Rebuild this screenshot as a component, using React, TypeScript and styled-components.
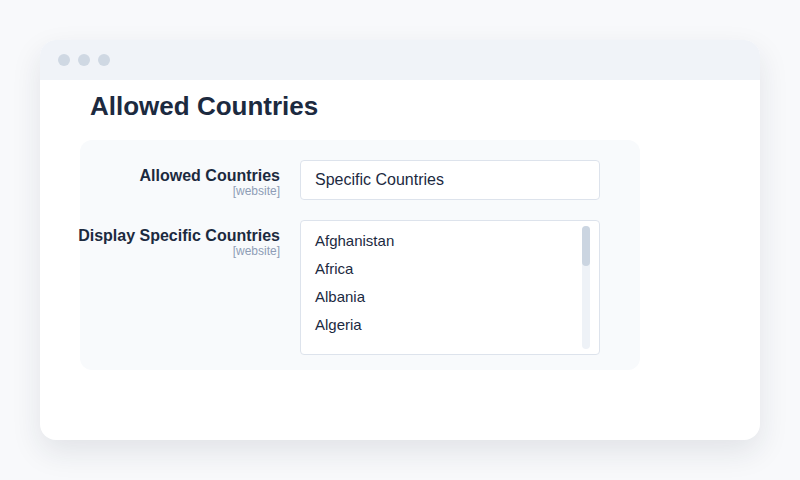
import * as React from 'react';
import styled, { createGlobalStyle } from 'styled-components';

const GlobalStyle = createGlobalStyle`
  html, body {
    margin: 0;
    padding: 0;
    background: #f8f9fb;
    font-family: 'Liberation Sans', Arial, sans-serif;
  }
`;

const Page = styled.div`
  width: 800px;
  height: 480px;
  padding: 40px;
  box-sizing: border-box;
`;

const Window = styled.div`
  width: 720px;
  height: 400px;
  background: #fff;
  border-radius: 16px;
  overflow: hidden;
  box-shadow: 0 12px 30px rgba(30, 41, 59, 0.1);
`;

const TitleBar = styled.div`
  height: 40px;
  background: #f0f3f8;
  display: flex;
  align-items: center;
  gap: 8px;
  padding-left: 18px;
`;

const Dot = styled.span`
  width: 12px;
  height: 12px;
  border-radius: 50%;
  background: #cfd8e3;
`;

const Content = styled.div`
  padding: 11px 0 0 40px;
`;

const Heading = styled.h1`
  margin: 0 0 18px 10px;
  font-size: 26px;
  line-height: 31px;
  font-weight: 700;
  color: #1c2a3f;
`;

const Panel = styled.div`
  width: 560px;
  box-sizing: border-box;
  background: #f8fafc;
  border-radius: 12px;
  padding: 20px 40px 15px 0;
  display: grid;
  grid-template-columns: 200px 300px;
  column-gap: 20px;
  row-gap: 20px;
`;

const LabelCell = styled.div`
  display: flex;
  flex-direction: column;
  align-items: flex-end;
  padding-top: 6px;
  white-space: nowrap;
`;

const Label = styled.div`
  font-size: 16px;
  line-height: 19px;
  font-weight: 700;
  color: #1c2a3f;
`;

const Scope = styled.div`
  font-size: 12px;
  line-height: 13px;
  color: #8e9db6;
`;

const Input = styled.div`
  height: 40px;
  box-sizing: border-box;
  background: #fff;
  border: 1px solid #dde3ec;
  border-radius: 4px;
  padding: 0 14px;
  display: flex;
  align-items: center;
  font-size: 16px;
  color: #1c2a3f;
`;

const ListBox = styled.div`
  height: 135px;
  box-sizing: border-box;
  background: #fff;
  border: 1px solid #dde3ec;
  border-radius: 4px;
  display: flex;
  padding: 5px 9px 5px 14px;
`;

const Items = styled.div`
  flex: 1;
  padding-top: 1px;
`;

const Option = styled.div`
  height: 28px;
  line-height: 28px;
  font-size: 15px;
  color: #1c2a3f;
`;

const Track = styled.div`
  width: 8px;
  background: #eef2f7;
  border-radius: 4px;
  display: flex;
  flex-direction: column;
`;

const Thumb = styled.div`
  height: 40px;
  background: #cbd5e1;
  border-radius: 4px;
`;

const countries = ['Afghanistan', 'Africa', 'Albania', 'Algeria'];

export default function App() {
  return (
    <Page>
      <GlobalStyle />
      <Window>
        <TitleBar>
          <Dot />
          <Dot />
          <Dot />
        </TitleBar>
        <Content>
          <Heading>Allowed Countries</Heading>
          <Panel>
            <LabelCell>
              <Label>Allowed Countries</Label>
              <Scope>[website]</Scope>
            </LabelCell>
            <Input>Specific Countries</Input>
            <LabelCell>
              <Label>Display Specific Countries</Label>
              <Scope>[website]</Scope>
            </LabelCell>
            <ListBox>
              <Items>
                {countries.map(c => (
                  <Option key={c}>{c}</Option>
                ))}
              </Items>
              <Track>
                <Thumb />
              </Track>
            </ListBox>
          </Panel>
        </Content>
      </Window>
    </Page>
  );
}
